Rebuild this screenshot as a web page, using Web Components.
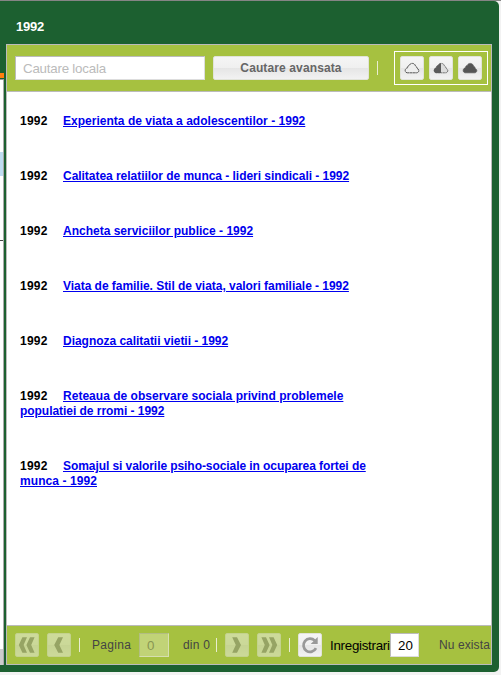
<!DOCTYPE html>
<html lang="ro"><head><meta charset="utf-8"><title>1992</title>
<style>html,body{margin:0;height:675px;overflow:hidden;background:#f2f2f2;font-family:"Liberation Sans",Arial,sans-serif}</style></head>
<body><archive-window heading="1992"></archive-window>
<script>
const define=(name,markup)=>customElements.define(name,class extends HTMLElement{
  connectedCallback(){
    if(this.shadowRoot)return;
    const t=document.createElement('template');
    t.innerHTML=typeof markup==='function'?markup(this):markup;
    this.attachShadow({mode:'open'}).append(t.content.cloneNode(true));
  }
});
const cloud='M3.2 12.8C1.8 12.6 1.1 11.6 1.2 10.3C1.3 9 2.2 8 3.6 7.8C3.4 6.6 4.1 5.6 5.3 5.4C5.8 4 7 3.3 8.3 3.4C10 3.4 11.3 4.5 11.5 6.2C12.6 6.5 13.2 7.4 13 8.4C14.2 8.8 14.9 9.8 14.8 10.8C14.7 12 13.8 12.8 12.5 12.8Z';
const icons={
  empty:`<svg width="16" height="16" viewBox="0 0 16 16"><path d="${cloud}" fill="#eee" stroke="#555" stroke-width="1" stroke-dasharray="2.4 .3"/></svg>`,
  half:`<svg width="16" height="16" viewBox="0 0 16 16"><path d="${cloud}" fill="#ddd" stroke="#666" stroke-width=".9" stroke-dasharray="2 .4"/><path d="M8 3.2V13.1H3.2C1.6 12.8.8 11.6.9 10.3C1 9 2 7.9 3.4 7.6C3.2 6.4 4 5.4 5.1 5.2C5.7 4 6.8 3.2 8 3.2Z" fill="#5a5a5a"/></svg>`,
  full:`<svg width="16" height="16" viewBox="0 0 16 16"><path d="${cloud}" fill="#555" stroke="#555" stroke-width=".7"/></svg>`,
  first:'<svg width="18" height="18" viewBox="0 0 18 18"><path d="M4.4 1.2H9L5.6 9L9 16.8H4.4L.8 9ZM12 1.2H16.6L13.2 9L16.6 16.8H12L8.4 9Z" fill="#888"/></svg>',
  prev:'<svg width="18" height="18" viewBox="0 0 18 18"><path d="M8.2 1.2H13L9.4 9L13 16.8H8.2L4.2 9Z" fill="#888"/></svg>',
  next:'<svg width="18" height="18" viewBox="0 0 18 18"><path d="M4.2 1.2H9L13 9L9 16.8H4.2L7.8 9Z" fill="#888"/></svg>',
  last:'<svg width="18" height="18" viewBox="0 0 18 18"><path d="M1.4 1.2H6L9.6 9L6 16.8H1.4L4.8 9ZM9 1.2H13.6L17.2 9L13.6 16.8H9L12.4 9Z" fill="#888"/></svg>',
  reload:'<svg width="18" height="18" viewBox="0 0 18 18"><path d="M13.8 4.6A6.6 6.6 0 1 0 15 12.2" fill="none" stroke="#999" stroke-width="2.7"/><path d="M16.7 1V8H9.7L12 5.7L14.4 3.3Z" fill="#999"/></svg>'
};
define('tool-button',el=>`<style>
:host{display:flex;flex:none;width:24px;height:24px}
button{all:unset;box-sizing:border-box;display:flex;align-items:center;justify-content:center;width:100%;height:24px;border:1px solid #e1e3d9;border-radius:2px;background:linear-gradient(#f5f5f5,#f0f0f0 48%,#e5e5e5 50%,#f2f2f2);color:#666;font:bold 12px "Liberation Sans",sans-serif;letter-spacing:.12px}
:host([disabled]) button{opacity:.5}
:host([wide]) button{padding-bottom:1px}
svg{display:block}</style><button>${icons[el.getAttribute('icon')]||''}<slot></slot></button>`);
define('bar-divider','<style>:host{display:block;flex:none;width:1px;height:14px;background:#e9edd0}</style>');
define('text-box',el=>`<style>
:host{display:block;flex:none}
input{box-sizing:border-box;display:block;width:100%;height:24px;margin:0;padding:1px 0 0 7px;border:1px solid;border-color:#bbb #ddd #ddd #bbb;border-radius:0;background:#fff;color:#000;font:13.33px "Liberation Sans",sans-serif}
input::placeholder{color:#bbb;opacity:1;letter-spacing:-.22px}
:host([disabled]) input{background:#c1d377;border-color:#b2bd82 #d6dfb0 #d6dfb0 #b2bd82;color:#899653}
</style><input value="${el.getAttribute('value')||''}" placeholder="${el.getAttribute('hint')||''}">`);
define('bar-label','<style>:host{display:block;flex:none;white-space:nowrap;font-size:12px;line-height:16px;color:#444}</style><slot></slot>');
define('study-row',`<style>
:host{display:block;width:360px;font-weight:bold;font-size:12px;line-height:15px;color:#000;margin-bottom:40px}
.year{display:inline-block;width:43px;letter-spacing:.25px}a{color:#00e}
</style><span class="year"><slot name="year"></slot></span><a href="#"><slot></slot></a>`);
define('search-bar',`<style>
:host{box-sizing:border-box;display:flex;flex:none;align-items:center;height:47px;padding:0 3px 0 8px;background:#a6c140;border-bottom:1px solid #bbb}
text-box{width:190px;margin-right:8px}
tool-button[wide]{width:156px;margin-right:8px}
.states{box-sizing:border-box;display:flex;gap:5px;margin-left:auto;width:94px;height:34px;padding:4px 5px;border:1px solid #fff}
</style><text-box hint="Cautare locala"></text-box><tool-button wide>Cautare avansata</tool-button><bar-divider></bar-divider>
<div class="states"><tool-button icon="empty"></tool-button><tool-button icon="half"></tool-button><tool-button icon="full"></tool-button></div>`);
define('paging-bar',`<style>
:host{box-sizing:border-box;display:flex;flex:none;align-items:center;height:39px;padding-left:8px;background:#a6c140;border-top:1px solid #bbb;overflow:hidden}
.gap{margin-left:8px}.page{width:47px;margin-left:12px;letter-spacing:.3px}.of{width:33px;margin-left:14px;letter-spacing:.2px}
.size{width:60px;margin-left:8px;font-size:13.33px;letter-spacing:-.27px;color:#000;padding-top:1px}
.number{width:30px}.count{width:29px}.status{margin-left:20px;letter-spacing:.1px}
</style><tool-button icon="first" disabled></tool-button><tool-button class="gap" icon="prev" disabled></tool-button>
<bar-divider class="gap"></bar-divider><bar-label class="page">Pagina</bar-label><text-box class="number" value="0" disabled></text-box>
<bar-label class="of">din 0</bar-label><bar-divider></bar-divider><tool-button class="gap" icon="next" disabled></tool-button>
<tool-button class="gap" icon="last" disabled></tool-button><bar-divider class="gap"></bar-divider><tool-button class="gap" icon="reload"></tool-button>
<bar-label class="size">Inregistrari</bar-label><text-box class="count" value="20"></text-box><bar-label class="status">Nu exista</bar-label>`);
// Each study is a list of [text, letter spacing] runs.
const studies=[
  [['Experienta de viata a adolescentilor - 1992',.02]],
  [['Calitatea relatiilor de munca - lideri sindicali - 1992',-.037]],
  [['Ancheta serviciilor publice - 1992',0]],
  [['Viata de familie. Stil de viata, valori familiale - 1992',-.036]],
  [['Diagnoza calitatii vietii - 1992',-.03]],
  [['Reteaua de observare sociala privind problemele',.02],['populatiei de rromi - 1992',-.04]],
  [['Somajul si valorile psiho-sociale in ocuparea fortei de',-.073],['munca - 1992',.08]]
];
const runs=s=>s.map(([t,k])=>`<span style="letter-spacing:${k}px">${t}</span>`).join(' ');
define('study-panel',`<style>
:host{box-sizing:border-box;display:flex;flex-direction:column;flex:none;width:486px;height:621px;border:1px solid #bbb;background:#fff}
main{flex:1;min-height:0;padding:22px 13px 0}
</style><search-bar></search-bar><main>${studies.map(s=>`<study-row><b slot="year">1992</b>${runs(s)}</study-row>`).join('')}</main><paging-bar></paging-bar>`);
define('side-strip',`<style>
:host{box-sizing:border-box;display:flex;flex-direction:column;flex:none;width:4px;height:621px;padding-top:29px;margin-right:2px}
.mark{height:5px;background:#ff7f0e}
.edge{box-sizing:border-box;margin-top:1px;height:586px;display:flex;flex-direction:column;background:#fff;border-top:1px solid #999;border-right:1px solid #aaa}
.pick{height:24px;margin-top:72px;background:#bfdcf1}.rule{height:1px;margin-top:64px;background:#444}.foot{margin-top:auto;height:16px;background:#ccc}
</style><div class="mark"></div><div class="edge"><div class="pick"></div><div class="rule"></div><div class="foot"></div></div>`);
define('archive-window',el=>`<style>
:host{box-sizing:border-box;display:block;height:675px;border-top:1px solid #858585}
section{width:499px;height:671px;background:#1c6030;border-radius:0 5px 5px 0}
header{box-sizing:border-box;height:43px;padding:18px 16px 0;font:bold 13px/16px "Liberation Sans",sans-serif;letter-spacing:-.2px;color:#fff}
.body{display:flex}
</style><section><header>${el.getAttribute('heading')}</header><div class="body"><side-strip></side-strip><study-panel></study-panel></div></section>`);
</script></body></html>
